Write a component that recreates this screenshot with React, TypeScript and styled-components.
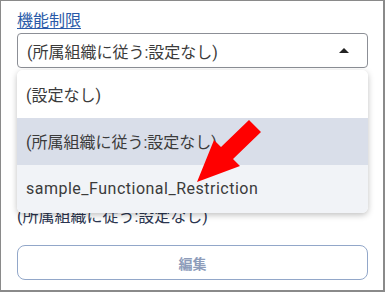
import React from "react";
import styled, { createGlobalStyle } from "styled-components";

const GlobalStyle = createGlobalStyle`
  html, body {
    margin: 0;
    padding: 0;
    background: #ffffff;
  }
  body {
    font-family: Roboto, "Noto Sans CJK JP", sans-serif;
  }
`;

const appColors = {
  text: "#3b3b3b",
  link: "#2a5aa8",
  border: "#8c8f96",
  selected: "#d9dee9",
  hover: "#f1f3f7",
  buttonBorder: "#92a7c9",
  buttonText: "#8d9cba",
  frame: "#8a8a8a",
};

const Frame = styled.div`
  position: relative;
  box-sizing: border-box;
  width: 385px;
  height: 292px;
  border: 1px solid ${appColors.frame};
  border-right-width: 2px;
  border-bottom-width: 2px;
  padding: 10px 15px 0 16px;
  overflow: hidden;
`;

const LabelRow = styled.div`
  height: 20px;
  line-height: 20px;
  margin-bottom: 2px;
`;

const Label = styled.a`
  font-size: 16px;
  color: ${appColors.link};
  text-decoration: underline;
  text-underline-offset: 2px;
`;

const SelectWrap = styled.div`
  position: relative;
  width: 351px;
`;

const SelectBox = styled.div`
  box-sizing: border-box;
  height: 35px;
  display: flex;
  align-items: center;
  justify-content: space-between;
  padding: 0 18px 0 9px;
  border: 1px solid ${appColors.border};
  border-radius: 4px;
  font-size: 16px;
  color: ${appColors.text};
`;

const Caret = styled.span`
  width: 0;
  height: 0;
  border-left: 5px solid transparent;
  border-right: 5px solid transparent;
  border-bottom: 5px solid #222;
`;

const Menu = styled.ul`
  position: absolute;
  top: 37px;
  left: 0;
  right: 0;
  margin: 0;
  padding: 0;
  list-style: none;
  background: #fff;
  border-radius: 6px;
  box-shadow: 0 2px 6px rgba(0, 0, 0, 0.25);
  overflow: hidden;
  z-index: 2;
`;

const Option = styled.li<{ $bg?: string; $latin?: boolean }>`
  box-sizing: border-box;
  height: 47.5px;
  display: flex;
  align-items: center;
  padding-left: 9px;
  font-size: 16px;
  letter-spacing: ${(props) => (props.$latin ? "0.5px" : "0")};
  color: ${appColors.text};
  background: ${(props) => props.$bg || "#fff"};
`;

const Current = styled.div`
  margin-top: 139px;
  font-size: 16px;
  line-height: 20px;
  height: 20px;
  color: #2b3550;
`;

const EditButton = styled.button`
  box-sizing: border-box;
  display: block;
  width: 351px;
  height: 35px;
  margin-top: 18px;
  background: #fff;
  border: 1px solid ${appColors.buttonBorder};
  border-radius: 8px;
  font-family: Roboto, "Noto Sans CJK JP", sans-serif;
  font-size: 14px;
  font-weight: bold;
  color: ${appColors.buttonText};
`;

const Arrow = styled.svg`
  position: absolute;
  left: 0;
  top: 0;
  z-index: 3;
  pointer-events: none;
`;

const options = [
  { label: "(設定なし)" },
  { label: "(所属組織に従う:設定なし)", bg: appColors.selected },
  { label: "sample_Functional_Restriction", bg: appColors.hover, latin: true },
];

const App: React.FC = () => {
  return (
    <>
      <GlobalStyle />
      <Frame>
        <LabelRow>
          <Label>機能制限</Label>
        </LabelRow>
        <SelectWrap>
          <SelectBox>
            <span>(所属組織に従う:設定なし)</span>
            <Caret />
          </SelectBox>
          <Menu>
            {options.map((o) => (
              <Option key={o.label} $bg={o.bg} $latin={o.latin}>
                {o.label}
              </Option>
            ))}
          </Menu>
        </SelectWrap>
        <Current>(所属組織に従う:設定なし)</Current>
        <EditButton>編集</EditButton>
        <Arrow width="385" height="292" viewBox="0 0 385 292">
          <polygon
            points="196,181 239,165 232,158 260,131 248,119 220,146 213,139"
            fill="#ff0000"
          />
        </Arrow>
      </Frame>
    </>
  );
};

export default App;
